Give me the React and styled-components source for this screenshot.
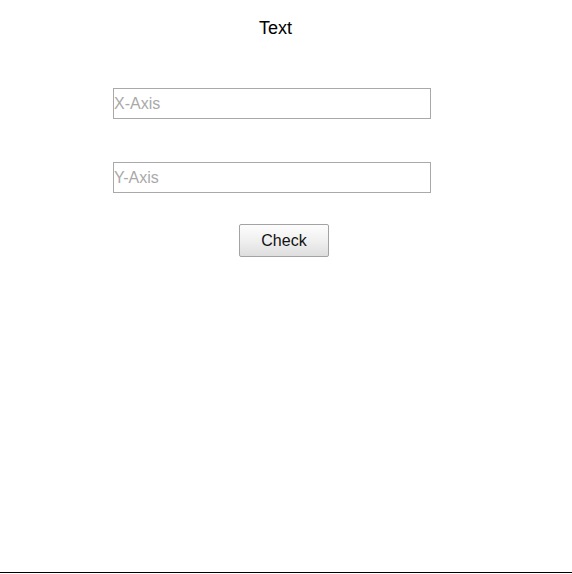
import React from "react";
import styled, { createGlobalStyle } from "styled-components";

const GlobalStyle = createGlobalStyle`
    html, body {
        margin: 0;
        padding: 0;
        background: #fff;
    }
    body {
        font-family: "Liberation Sans", Arial, sans-serif;
    }
`;

const Page = styled.div`
    width: 100%;
    height: 573px;
    box-sizing: border-box;
    border-bottom: 1px solid #000;
    display: flex;
    flex-direction: column;
    align-items: flex-start;
`;

const Title = styled.h1`
    margin: 18px 0 0 259px;
    font-size: 18px;
    font-weight: 400;
    line-height: 21px;
    color: #000;
`;

const Field = styled.input`
    box-sizing: border-box;
    width: 318px;
    height: 31px;
    margin: ${({ top }) => top}px 0 0 113px;
    padding: 0;
    border: 1px solid #a9a9a9;
    border-radius: 0;
    outline: none;
    font-family: "Liberation Sans", Arial, sans-serif;
    font-size: 16px;
    color: #000;

    &::placeholder {
        color: #a9a9a9;
    }
`;

const Button = styled.button`
    box-sizing: border-box;
    width: 90px;
    height: 33px;
    margin: 31px 0 0 239px;
    border: 1px solid #a3a3a3;
    border-radius: 2px;
    background: linear-gradient(to bottom, #fdfdfd 0%, #f0f0f0 50%, #dedede 100%);
    font-family: "Liberation Sans", Arial, sans-serif;
    font-size: 16px;
    color: #111;
    cursor: pointer;
`;

export default function App() {
    return (
        <>
            <GlobalStyle />
            <Page>
                <Title>Text</Title>
                <Field top={49} placeholder="X-Axis" />
                <Field top={43} placeholder="Y-Axis" />
                <Button>Check</Button>
            </Page>
        </>
    );
}
